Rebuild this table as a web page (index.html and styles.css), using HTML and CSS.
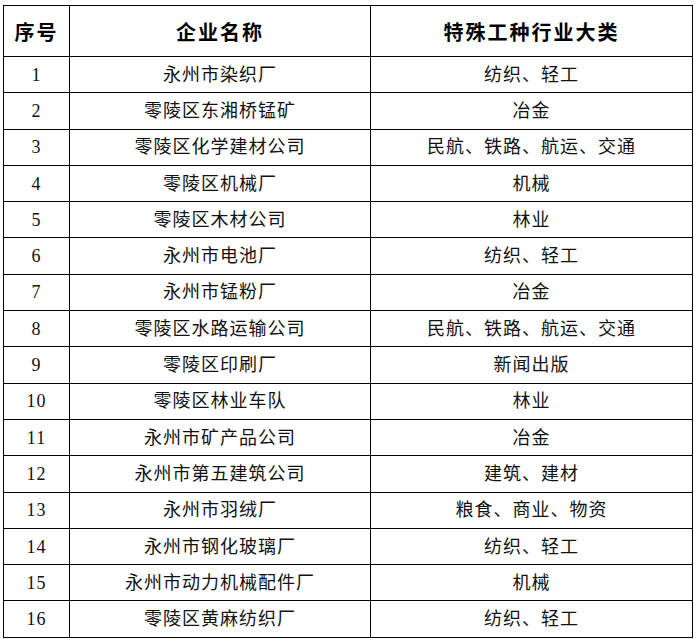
FILE: index.html
```html
<!DOCTYPE html>
<html lang="zh-CN">
<head>
<meta charset="utf-8">
<title>特殊工种行业大类</title>
<link rel="stylesheet" href="styles.css">
</head>
<body>
<table class="grid">
  <colgroup>
    <col class="c-no">
    <col class="c-name">
    <col class="c-cat">
  </colgroup>
  <thead>
    <tr class="head">
      <th>序号</th>
      <th>企业名称</th>
      <th>特殊工种行业大类</th>
    </tr>
  </thead>
  <tbody>
    <tr><td>1</td><td>永州市染织厂</td><td>纺织、轻工</td></tr>
    <tr><td>2</td><td>零陵区东湘桥锰矿</td><td>冶金</td></tr>
    <tr><td>3</td><td>零陵区化学建材公司</td><td>民航、铁路、航运、交通</td></tr>
    <tr><td>4</td><td>零陵区机械厂</td><td>机械</td></tr>
    <tr><td>5</td><td>零陵区木材公司</td><td>林业</td></tr>
    <tr><td>6</td><td>永州市电池厂</td><td>纺织、轻工</td></tr>
    <tr><td>7</td><td>永州市锰粉厂</td><td>冶金</td></tr>
    <tr><td>8</td><td>零陵区水路运输公司</td><td>民航、铁路、航运、交通</td></tr>
    <tr><td>9</td><td>零陵区印刷厂</td><td>新闻出版</td></tr>
    <tr><td>10</td><td>零陵区林业车队</td><td>林业</td></tr>
    <tr><td>11</td><td>永州市矿产品公司</td><td>冶金</td></tr>
    <tr><td>12</td><td>永州市第五建筑公司</td><td>建筑、建材</td></tr>
    <tr><td>13</td><td>永州市羽绒厂</td><td>粮食、商业、物资</td></tr>
    <tr><td>14</td><td>永州市钢化玻璃厂</td><td>纺织、轻工</td></tr>
    <tr><td>15</td><td>永州市动力机械配件厂</td><td>机械</td></tr>
    <tr><td>16</td><td>零陵区黄麻纺织厂</td><td>纺织、轻工</td></tr>
  </tbody>
</table>
</body>
</html>
```

FILE: styles.css
```css
html, body {
  margin: 0;
  padding: 0;
  background: #ffffff;
}

body {
  padding: 5px 0 0 3px;
}

.grid {
  border-collapse: collapse;
  table-layout: fixed;
  width: 689px;
  color: #111111;
  font-family: "Liberation Serif", "Noto Sans CJK SC", serif;
}

.c-no { width: 66px; }
.c-name { width: 301px; }
.c-cat { width: 322px; }

.grid th,
.grid td {
  border: 1px solid #000000;
  padding: 0;
  text-align: center;
  vertical-align: middle;
  overflow: hidden;
  white-space: nowrap;
}

.grid th {
  font-family: "Noto Sans CJK SC", sans-serif;
  font-weight: 700;
  font-size: 20px;
  letter-spacing: 2px;
  color: #000000;
  height: 50px;
}

.grid td {
  font-size: 18px;
  font-weight: 400;
  letter-spacing: 1px;
  height: 35.3px;
  line-height: 20px;
}
```
